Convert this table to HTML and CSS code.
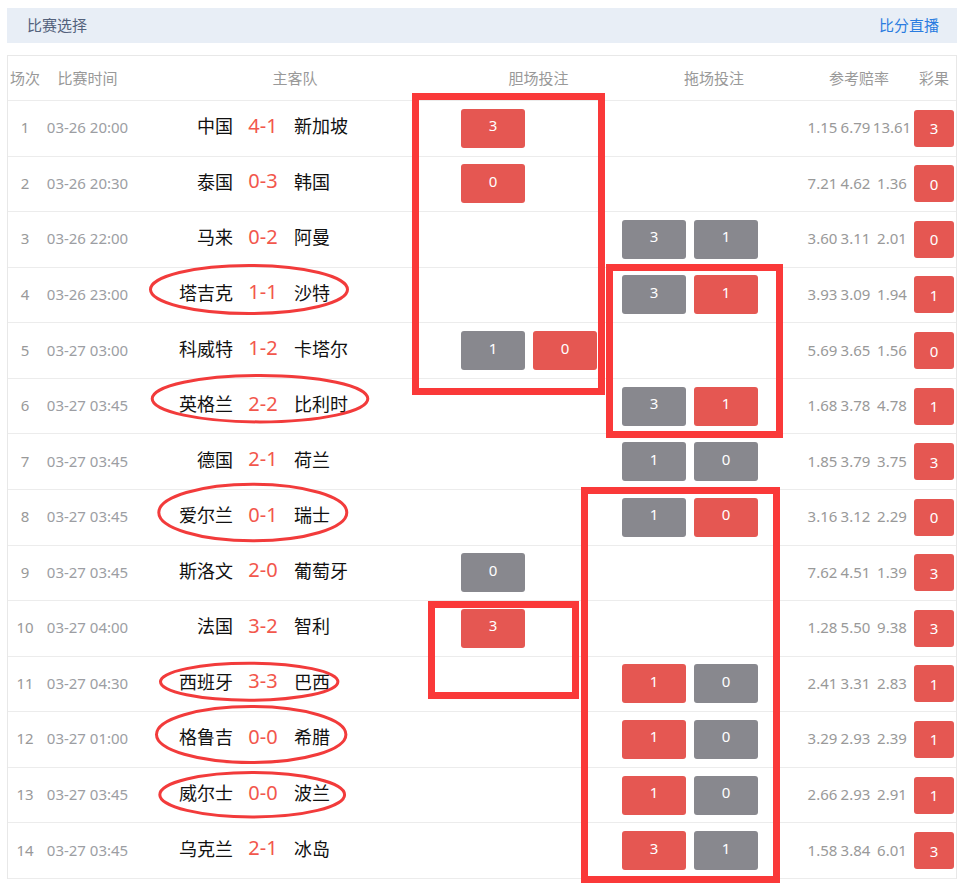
FILE: index.html
```html
<!DOCTYPE html>
<html lang="zh-CN">
<head>
<meta charset="utf-8">
<title>比赛选择</title>
<link rel="stylesheet" href="styles.css">
</head>
<body>
<div class="page">
  <div class="bar">
    <span class="bar-title">比赛选择</span>
    <a class="bar-link">比分直播</a>
  </div>
  <div class="table">
    <div class="row head">
      <div class="h-no">场次</div>
      <div class="h-time">比赛时间</div>
      <div class="h-team">主客队</div>
      <div class="h-dan">胆场投注</div>
      <div class="h-tuo">拖场投注</div>
      <div class="h-odds">参考赔率</div>
      <div class="h-res">彩果</div>
    </div>

    <div class="row">
      <div class="c-no">1</div><div class="c-time">03-26 20:00</div>
      <div class="c-team"><span class="home">中国</span><span class="score">4-1</span><span class="away">新加坡</span></div>
      <div class="c-dan"><span class="btn red">3</span></div>
      <div class="c-tuo"></div>
      <div class="c-odds"><span>1.15</span><span>6.79</span><span>13.61</span></div>
      <div class="c-res"><span class="res">3</span></div>
    </div>
    <div class="row">
      <div class="c-no">2</div><div class="c-time">03-26 20:30</div>
      <div class="c-team"><span class="home">泰国</span><span class="score">0-3</span><span class="away">韩国</span></div>
      <div class="c-dan"><span class="btn red">0</span></div>
      <div class="c-tuo"></div>
      <div class="c-odds"><span>7.21</span><span>4.62</span><span>1.36</span></div>
      <div class="c-res"><span class="res">0</span></div>
    </div>
    <div class="row">
      <div class="c-no">3</div><div class="c-time">03-26 22:00</div>
      <div class="c-team"><span class="home">马来</span><span class="score">0-2</span><span class="away">阿曼</span></div>
      <div class="c-dan"></div>
      <div class="c-tuo"><span class="btn gray">3</span><span class="btn gray">1</span></div>
      <div class="c-odds"><span>3.60</span><span>3.11</span><span>2.01</span></div>
      <div class="c-res"><span class="res">0</span></div>
    </div>
    <div class="row">
      <div class="c-no">4</div><div class="c-time">03-26 23:00</div>
      <div class="c-team"><span class="home">塔吉克</span><span class="score">1-1</span><span class="away">沙特</span></div>
      <div class="c-dan"></div>
      <div class="c-tuo"><span class="btn gray">3</span><span class="btn red">1</span></div>
      <div class="c-odds"><span>3.93</span><span>3.09</span><span>1.94</span></div>
      <div class="c-res"><span class="res">1</span></div>
    </div>
    <div class="row">
      <div class="c-no">5</div><div class="c-time">03-27 03:00</div>
      <div class="c-team"><span class="home">科威特</span><span class="score">1-2</span><span class="away">卡塔尔</span></div>
      <div class="c-dan"><span class="btn gray">1</span><span class="btn red">0</span></div>
      <div class="c-tuo"></div>
      <div class="c-odds"><span>5.69</span><span>3.65</span><span>1.56</span></div>
      <div class="c-res"><span class="res">0</span></div>
    </div>
    <div class="row">
      <div class="c-no">6</div><div class="c-time">03-27 03:45</div>
      <div class="c-team"><span class="home">英格兰</span><span class="score">2-2</span><span class="away">比利时</span></div>
      <div class="c-dan"></div>
      <div class="c-tuo"><span class="btn gray">3</span><span class="btn red">1</span></div>
      <div class="c-odds"><span>1.68</span><span>3.78</span><span>4.78</span></div>
      <div class="c-res"><span class="res">1</span></div>
    </div>
    <div class="row">
      <div class="c-no">7</div><div class="c-time">03-27 03:45</div>
      <div class="c-team"><span class="home">德国</span><span class="score">2-1</span><span class="away">荷兰</span></div>
      <div class="c-dan"></div>
      <div class="c-tuo"><span class="btn gray">1</span><span class="btn gray">0</span></div>
      <div class="c-odds"><span>1.85</span><span>3.79</span><span>3.75</span></div>
      <div class="c-res"><span class="res">3</span></div>
    </div>
    <div class="row">
      <div class="c-no">8</div><div class="c-time">03-27 03:45</div>
      <div class="c-team"><span class="home">爱尔兰</span><span class="score">0-1</span><span class="away">瑞士</span></div>
      <div class="c-dan"></div>
      <div class="c-tuo"><span class="btn gray">1</span><span class="btn red">0</span></div>
      <div class="c-odds"><span>3.16</span><span>3.12</span><span>2.29</span></div>
      <div class="c-res"><span class="res">0</span></div>
    </div>
    <div class="row">
      <div class="c-no">9</div><div class="c-time">03-27 03:45</div>
      <div class="c-team"><span class="home">斯洛文</span><span class="score">2-0</span><span class="away">葡萄牙</span></div>
      <div class="c-dan"><span class="btn gray">0</span></div>
      <div class="c-tuo"></div>
      <div class="c-odds"><span>7.62</span><span>4.51</span><span>1.39</span></div>
      <div class="c-res"><span class="res">3</span></div>
    </div>
    <div class="row">
      <div class="c-no">10</div><div class="c-time">03-27 04:00</div>
      <div class="c-team"><span class="home">法国</span><span class="score">3-2</span><span class="away">智利</span></div>
      <div class="c-dan"><span class="btn red">3</span></div>
      <div class="c-tuo"></div>
      <div class="c-odds"><span>1.28</span><span>5.50</span><span>9.38</span></div>
      <div class="c-res"><span class="res">3</span></div>
    </div>
    <div class="row">
      <div class="c-no">11</div><div class="c-time">03-27 04:30</div>
      <div class="c-team"><span class="home">西班牙</span><span class="score">3-3</span><span class="away">巴西</span></div>
      <div class="c-dan"></div>
      <div class="c-tuo"><span class="btn red">1</span><span class="btn gray">0</span></div>
      <div class="c-odds"><span>2.41</span><span>3.31</span><span>2.83</span></div>
      <div class="c-res"><span class="res">1</span></div>
    </div>
    <div class="row">
      <div class="c-no">12</div><div class="c-time">03-27 01:00</div>
      <div class="c-team"><span class="home">格鲁吉</span><span class="score">0-0</span><span class="away">希腊</span></div>
      <div class="c-dan"></div>
      <div class="c-tuo"><span class="btn red">1</span><span class="btn gray">0</span></div>
      <div class="c-odds"><span>3.29</span><span>2.93</span><span>2.39</span></div>
      <div class="c-res"><span class="res">1</span></div>
    </div>
    <div class="row">
      <div class="c-no">13</div><div class="c-time">03-27 03:45</div>
      <div class="c-team"><span class="home">威尔士</span><span class="score">0-0</span><span class="away">波兰</span></div>
      <div class="c-dan"></div>
      <div class="c-tuo"><span class="btn red">1</span><span class="btn gray">0</span></div>
      <div class="c-odds"><span>2.66</span><span>2.93</span><span>2.91</span></div>
      <div class="c-res"><span class="res">1</span></div>
    </div>
    <div class="row">
      <div class="c-no">14</div><div class="c-time">03-27 03:45</div>
      <div class="c-team"><span class="home">乌克兰</span><span class="score">2-1</span><span class="away">冰岛</span></div>
      <div class="c-dan"></div>
      <div class="c-tuo"><span class="btn red">3</span><span class="btn gray">1</span></div>
      <div class="c-odds"><span>1.58</span><span>3.84</span><span>6.01</span></div>
      <div class="c-res"><span class="res">3</span></div>
    </div>
  </div>
</div>

<svg class="marks" width="976" height="890" viewBox="0 0 976 890">
  <g class="box">
    <rect x="415.5" y="96.5" width="186" height="295"/>
    <rect x="609.5" y="267.5" width="170" height="167"/>
    <rect x="584.5" y="490.5" width="192" height="389"/>
    <rect x="431.5" y="604.5" width="144" height="91"/>
  </g>
  <g class="ring">
    <ellipse cx="249" cy="289.5" rx="98.5" ry="24"/>
    <ellipse cx="260" cy="398.7" rx="107.8" ry="23.2"/>
    <ellipse cx="252.8" cy="512.5" rx="94" ry="28.3"/>
    <ellipse cx="249.2" cy="681.7" rx="88.7" ry="18.5"/>
    <ellipse cx="251.2" cy="734.5" rx="94.7" ry="28"/>
    <ellipse cx="252.2" cy="794.7" rx="92.4" ry="22.2"/>
  </g>
</svg>
</body>
</html>
```

FILE: styles.css
```css
* { box-sizing: border-box; }
html, body { margin: 0; padding: 0; background: #fff; }
body {
  font-family: "Noto Sans", "Noto Sans CJK SC", sans-serif;
  color: #111;
}
.page {
  padding: 8px 0 0 7px;
  width: 957px;
}
.bar {
  height: 35px;
  background: #e8eef6;
  display: flex;
  align-items: center;
  justify-content: space-between;
  padding: 0 18px 2px 20px;
  font-size: 15px;
}
.bar-title { color: #54627c; }
.bar-link { color: #2a7ce0; text-decoration: none; }

.table {
  margin-top: 12px;
  border: 1px solid #e8e8e8;
  border-bottom: none;
}
.row {
  display: grid;
  grid-template-columns: 34px 91px 322px 161px 190px 106px 44px;
  align-items: center;
  height: 55.57px;
  border-bottom: 1px solid #ececec;
}
.row.head {
  height: 45px;
  font-size: 15px;
  color: #999;
  text-align: center;
  padding-bottom: 2px;
}
.h-dan, .h-tuo { padding-left: 6px; }
.h-team { padding-left: 2px; }

.c-no {
  text-align: center;
  font-size: 15px;
  color: #999;
  padding-bottom: 2px;
}
.c-time {
  text-align: center;
  font-size: 15px;
  color: #9c9ea3;
  padding-bottom: 2px;
}
.c-team {
  display: flex;
  align-items: center;
  font-size: 18px;
  color: #111;
  padding-bottom: 6px;
}
.home { width: 100px; text-align: right; }
.score {
  width: 60px;
  text-align: center;
  font-size: 20px;
  color: #f2574c;
}
.away { margin-left: 1px; }

.c-dan, .c-tuo {
  display: flex;
  gap: 8px;
  padding-left: 6px;
}
.btn {
  width: 64px;
  height: 39px;
  border-radius: 3px;
  display: flex;
  align-items: center;
  justify-content: center;
  padding-bottom: 6px;
  color: #fff;
  font-size: 15px;
}
.red { background: #e55752; }
.gray { background: #88888e; }

.c-odds {
  display: grid;
  grid-template-columns: 33px 33px 40px;
  font-size: 15px;
  color: #999;
  text-align: center;
  padding-bottom: 2px;
}
.c-res {
  display: flex;
  justify-content: center;
}
.res {
  width: 40px;
  height: 37px;
  border-radius: 3px;
  background: #e55752;
  color: #fff;
  font-size: 15px;
  display: flex;
  align-items: center;
  justify-content: center;
}

.marks {
  position: absolute;
  left: 0;
  top: 0;
  pointer-events: none;
}
.box rect {
  fill: none;
  stroke: #fa3939;
  stroke-width: 7;
}
.ring ellipse {
  fill: none;
  stroke: #f23b3b;
  stroke-width: 3;
}
```
